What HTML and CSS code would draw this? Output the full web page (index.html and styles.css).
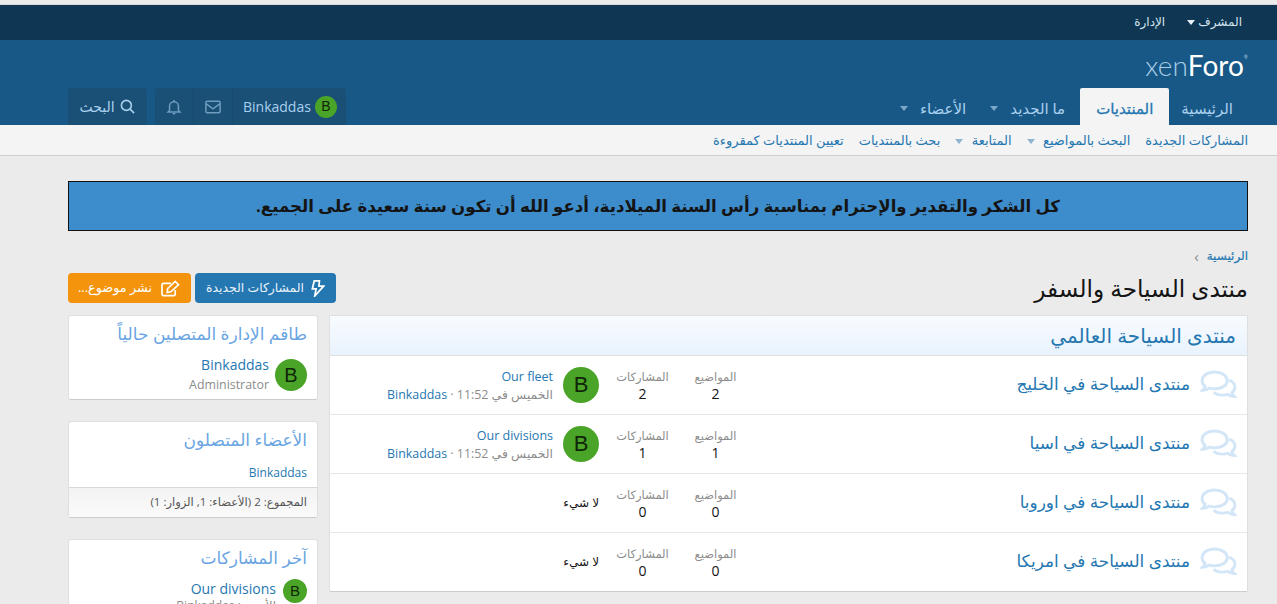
FILE: index.html
```html
<!DOCTYPE html>
<html lang="ar" dir="rtl">
<head>
<meta charset="utf-8">
<title>منتدى السياحة والسفر</title>
<link rel="stylesheet" href="styles.css">
</head>
<body>
<div class="page">
  <div class="staffbar">
    <a class="staff-link">المشرف <span class="caret caret-white"></span></a>
    <a class="staff-link">الإدارة</a>
  </div>
  <header class="header">
    <div class="logo-row"><span class="logo" dir="ltr"><span class="logo-xen">xen</span>Foro<sup class="logo-r">®</sup></span></div>
    <div class="nav-row">
      <nav class="tabs">
        <a class="tab tab-home">الرئيسية</a>
        <a class="tab tab-active">المنتديات</a>
        <a class="tab tab-menu">ما الجديد <span class="caret caret-nav"></span></a>
        <a class="tab tab-menu">الأعضاء <span class="caret caret-nav"></span></a>
      </nav>
      <div class="tools">
        <div class="toolgroup">
          <a class="tool tool-user"><span class="avatar avatar-xs">B</span><span dir="ltr">Binkaddas</span></a>
          <a class="tool tool-icon">
            <svg class="ico-m" viewBox="0 0 18 16"><rect x="1" y="1.500" width="16" height="13" rx="1.600"/><path d="M1.500 4.500 9 10l7.500-5.500"/></svg>
          </a>
          <a class="tool tool-icon">
            <svg class="ico-m" viewBox="0 0 16 18"><path d="M8 1v1.500M3 13V8a5 5 0 0 1 10 0v5l1.500 1.500h-13z"/><path d="M6.500 16.500h3"/></svg>
          </a>
        </div>
        <a class="tool toolgroup tool-search">
          <svg class="ico-s" viewBox="0 0 16 16"><circle cx="6.800" cy="6.800" r="5.300"/><path d="m10.800 10.800 4.200 4.200"/></svg>
          <span>البحث</span>
        </a>
      </div>
    </div>
  </header>
  <div class="subnav">
    <a>المشاركات الجديدة</a>
    <a>البحث بالمواضيع <span class="caret caret-sub"></span></a>
    <a>المتابعة <span class="caret caret-sub"></span></a>
    <a>بحث بالمنتديات</a>
    <a>تعيين المنتديات كمقروءة</a>
  </div>
  <main class="content">
    <div class="notice">كل الشكر والتقدير والإحترام بمناسبة رأس السنة الميلادية، أدعو الله أن تكون سنة سعيدة على الجميع.</div>
    <div class="crumbs"><a>الرئيسية</a><span class="crumb-sep">›</span></div>
    <div class="titlebar">
      <h1 class="title">منتدى السياحة والسفر</h1>
      <div class="actions">
        <a class="btn btn-blue">
          <svg class="btn-ico" viewBox="0 0 14 18"><path d="M8.500 1H3L1 9.500h4L3.500 17 13 6.500H8z"/></svg>
          المشاركات الجديدة</a>
        <a class="btn btn-orange">
          <svg class="btn-ico btn-ico-w" viewBox="0 0 20 18"><path d="M15 10.500V15a1.500 1.500 0 0 1-1.500 1.500h-11A1.500 1.500 0 0 1 1 15V5a1.500 1.500 0 0 1 1.500-1.500h8"/><path d="M7 9 15 1.500 18.500 5l-8 7.500-4 .8z"/></svg>
          نشر موضوع...</a>
      </div>
    </div>
    <div class="columns">
      <section class="forums">
        <h2 class="cat">منتدى السياحة العالمي</h2>
        <div class="row">
          <svg class="comments" viewBox="0 0 38 30"><path d="M15 2C7.500 2 2 6 2 11c0 2.500 1.300 4.500 3.200 6-.4 1.700-1.500 3-2.700 4 3 0 5.500-1 7-2.200 1.800.5 3.500.7 5.500.7 7.500 0 13-3.500 13-8.500S22.500 2 15 2z"/><path d="M30 10.500c3.700 1.500 6 4 6 7 0 2.500-1.300 4.500-3.200 6 .4 1.700 1.500 3 2.700 4-3 0-5.500-1-7-2.200-1.800.5-3.500.7-5.500.7-3.500 0-7-1-9-3"/></svg>
          <a class="forum-name">منتدى السياحة في الخليج</a>
          <div class="stat"><span class="stat-label">المواضيع</span><span class="stat-val">2</span></div>
          <div class="stat"><span class="stat-label">المشاركات</span><span class="stat-val">2</span></div>
          <div class="last">
            <span class="avatar avatar-m">B</span>
            <div class="last-text">
              <a class="last-title" dir="ltr">Our fleet</a>
              <div class="last-meta">الخميس في 11:52 · <a dir="ltr">Binkaddas</a></div>
            </div>
          </div>
        </div>
        <div class="row">
          <svg class="comments" viewBox="0 0 38 30"><path d="M15 2C7.500 2 2 6 2 11c0 2.500 1.300 4.500 3.200 6-.4 1.700-1.500 3-2.700 4 3 0 5.500-1 7-2.200 1.800.5 3.500.7 5.500.7 7.500 0 13-3.500 13-8.500S22.500 2 15 2z"/><path d="M30 10.500c3.700 1.500 6 4 6 7 0 2.500-1.300 4.500-3.200 6 .4 1.700 1.500 3 2.700 4-3 0-5.500-1-7-2.200-1.800.5-3.500.7-5.500.7-3.500 0-7-1-9-3"/></svg>
          <a class="forum-name">منتدى السياحة في اسيا</a>
          <div class="stat"><span class="stat-label">المواضيع</span><span class="stat-val">1</span></div>
          <div class="stat"><span class="stat-label">المشاركات</span><span class="stat-val">1</span></div>
          <div class="last">
            <span class="avatar avatar-m">B</span>
            <div class="last-text">
              <a class="last-title" dir="ltr">Our divisions</a>
              <div class="last-meta">الخميس في 11:52 · <a dir="ltr">Binkaddas</a></div>
            </div>
          </div>
        </div>
        <div class="row">
          <svg class="comments" viewBox="0 0 38 30"><path d="M15 2C7.500 2 2 6 2 11c0 2.500 1.300 4.500 3.200 6-.4 1.700-1.500 3-2.700 4 3 0 5.500-1 7-2.200 1.800.5 3.500.7 5.500.7 7.500 0 13-3.500 13-8.500S22.500 2 15 2z"/><path d="M30 10.500c3.700 1.500 6 4 6 7 0 2.500-1.300 4.500-3.200 6 .4 1.700 1.500 3 2.700 4-3 0-5.500-1-7-2.200-1.800.5-3.500.7-5.500.7-3.500 0-7-1-9-3"/></svg>
          <a class="forum-name">منتدى السياحة في اوروبا</a>
          <div class="stat"><span class="stat-label">المواضيع</span><span class="stat-val">0</span></div>
          <div class="stat"><span class="stat-label">المشاركات</span><span class="stat-val">0</span></div>
          <div class="last"><span class="none">لا شيء</span></div>
        </div>
        <div class="row">
          <svg class="comments" viewBox="0 0 38 30"><path d="M15 2C7.500 2 2 6 2 11c0 2.500 1.300 4.500 3.200 6-.4 1.700-1.500 3-2.700 4 3 0 5.500-1 7-2.200 1.800.5 3.500.7 5.500.7 7.500 0 13-3.500 13-8.500S22.500 2 15 2z"/><path d="M30 10.500c3.700 1.500 6 4 6 7 0 2.500-1.300 4.500-3.200 6 .4 1.700 1.500 3 2.700 4-3 0-5.500-1-7-2.200-1.800.5-3.500.7-5.500.7-3.500 0-7-1-9-3"/></svg>
          <a class="forum-name">منتدى السياحة في امريكا</a>
          <div class="stat"><span class="stat-label">المواضيع</span><span class="stat-val">0</span></div>
          <div class="stat"><span class="stat-label">المشاركات</span><span class="stat-val">0</span></div>
          <div class="last"><span class="none">لا شيء</span></div>
        </div>
      </section>
      <aside class="side">
        <section class="card">
          <h3 class="card-title">طاقم الإدارة المتصلين حالياً</h3>
          <div class="staff-row">
            <span class="avatar avatar-m2">B</span>
            <div class="staff-text">
              <a class="staff-name" dir="ltr">Binkaddas</a>
              <div class="staff-role" dir="ltr">Administrator</div>
            </div>
          </div>
        </section>
        <section class="card">
          <h3 class="card-title">الأعضاء المتصلون</h3>
          <div class="online"><a dir="ltr">Binkaddas</a></div>
          <div class="card-foot">المجموع: 2 (الأعضاء: 1, الزوار: 1)</div>
        </section>
        <section class="card">
          <h3 class="card-title">آخر المشاركات</h3>
          <div class="recent">
            <span class="avatar avatar-s">B</span>
            <div>
              <a class="recent-title" dir="ltr">Our divisions</a>
              <div class="recent-meta">الأحدث: Binkaddas</div>
            </div>
          </div>
        </section>
      </aside>
    </div>
  </main>
</div>
</body>
</html>
```
FILE: styles.css
```css
* { box-sizing: border-box; }
html, body { margin: 0; padding: 0; }
body {
  background: #ebebeb;
  color: #141414;
  font-family: "Open Sans", "Noto Sans", "DejaVu Sans", sans-serif;
  font-size: 13px;
  line-height: 1.4;
}
a { color: #2577b1; text-decoration: none; }
.page { height: 604px; overflow: hidden; }

.staffbar {
  margin-top: 4px;
  border-top: 1px solid #d8d8d8;
  height: 36px;
  background: #0f3652;
  display: flex;
  align-items: center;
  gap: 22px;
  padding: 0 35px 0 68px;
  font-size: 12px;
}
.staff-link { color: #d3e4f0; }

.caret {
  display: inline-block;
  width: 0;
  height: 0;
  border-style: solid;
  border-width: 5px 4.500px 0;
  border-color: transparent;
  vertical-align: middle;
}
.caret-white { border-top-color: #e8f1f7; margin-right: 0; }
.caret-nav { border-top-color: #7ba7c7; margin-right: 12px; }
.caret-sub { border-top-color: #8eb4d0; margin-right: 5px; }

.header { background: #185886; height: 85px; padding: 0 29px 0 68px; display: flex; flex-direction: column; }
.logo-row { height: 48px; display: flex; align-items: center; justify-content: flex-start; }
.logo {
  font-family: "Lato", "Open Sans", sans-serif;
  font-weight: 400;
  font-size: 28px;
  line-height: 1;
  color: #fff;
  margin-top: 1px;
}
.logo-xen { color: #a9cde6; font-weight: 300; }
.logo-r { font-size: 5px; vertical-align: top; line-height: 2.600; color: #a9cde6; }

.nav-row { flex: 1; display: flex; justify-content: space-between; align-items: flex-end; }
.tabs { display: flex; height: 37px; }
.tab {
  color: #a9d0ee;
  font-size: 15px;
  padding: 3px 15px 0 13px;
  display: flex;
  align-items: center;
  white-space: nowrap;
}
.tab-home { padding-left: 12px; }
.tab-active {
  background: #f4f4f4;
  color: #2577b1;
  -webkit-text-stroke: 0.300px #2577b1;
  padding: 3px 16px 0;
  border-radius: 2px 2px 0 0;
}
.tab-menu { padding: 3px 15px 0 9px; }

.tools { display: flex; gap: 8px; height: 37px; }
.toolgroup { display: flex; background: #1a4f76; border-radius: 4px 4px 0 0; }
.tool { color: #a9d0ee; display: flex; align-items: center; font-size: 14px; }
.tool-user { padding: 0 9px 0 10px; gap: 4px; height: 37px; }
.tool-icon { width: 39px; height: 37px; justify-content: center; border-right: 1px solid #184a6f; }
.tool-search { padding: 0 9px 0 8px; gap: 5px; width: 79px; justify-content: center; }
.ico-m { width: 16px; height: 16px; fill: none; stroke: #6e9cbe; stroke-width: 1.700; }
.ico-s { width: 15px; height: 15px; fill: none; stroke: #a9d0ee; stroke-width: 1.700; }

.avatar {
  display: inline-flex;
  align-items: center;
  justify-content: center;
  border-radius: 50%;
  background: #49a427;
  color: #10250a;
  font-family: "Liberation Sans", sans-serif;
  flex: none;
}
.avatar-xs { width: 22px; height: 22px; font-size: 14px; }
.avatar-s { width: 24px; height: 24px; font-size: 15px; }
.avatar-m { width: 36px; height: 36px; font-size: 22px; }
.avatar-m2 { width: 32px; height: 32px; font-size: 20px; }

.subnav {
  height: 31px;
  background: #f4f4f4;
  border-bottom: 1px solid #cfcfcf;
  padding: 0 29px 0 68px;
  display: flex;
  align-items: center;
  gap: 15px;
  font-size: 13px;
}

.content { padding: 25px 29px 0 68px; }
.notice {
  height: 50px;
  background: #3d8ccb;
  border: 1px solid #111;
  color: #141414;
  font-size: 16.600px;
  font-weight: 700;
  display: flex;
  align-items: center;
  justify-content: center;
}
.crumbs { margin-top: 16px; height: 18px; display: flex; align-items: center; gap: 8px; font-size: 12px; -webkit-text-stroke: 0.200px #2577b1; }
.crumb-sep { color: #8c8c8c; font-size: 15px; -webkit-text-stroke: 0; }
.titlebar { display: flex; justify-content: space-between; align-items: flex-start; height: 42px; margin-top: 8px; }
.title { margin: -1px 0 0; font-size: 23.200px; font-weight: 400; line-height: 32px; color: #141414; }
.actions { display: flex; gap: 4px; }
.btn {
  height: 30px;
  border-radius: 4px;
  color: #eaf3fa;
  font-size: 12.400px;
  display: flex;
  align-items: center;
  gap: 6px;
  padding: 0 11px;
  white-space: nowrap;
}
.btn-blue { background: #2577b1; width: 141px; gap: 7px; }
.btn-orange { background: #f4940c; width: 123px; color: #fff; font-size: 12.800px; gap: 9px; }
.btn-ico { width: 14px; height: 17px; fill: none; stroke: #fff; stroke-width: 1.800; flex: none; }
.btn-ico-w { width: 19px; }

.columns { display: flex; justify-content: space-between; align-items: flex-start; }
.forums {
  width: 919px;
  background: #fff;
  border: 1px solid #dfdfdf;
  border-bottom-color: #cbcbcb;
  border-radius: 2px;
}
.cat {
  margin: 0;
  height: 40px;
  background: linear-gradient(#f8fbfe, #e9f3fd);
  border-bottom: 1px solid #dfdfdf;
  color: #2577b1;
  font-size: 20px;
  font-weight: 400;
  padding: 0 11px;
  display: flex;
  align-items: center;
}
.row {
  height: 59px;
  display: flex;
  align-items: center;
  border-bottom: 1px solid #e7e7e7;
  padding-right: 10px;
}
.row:last-child { height: 58px; border-bottom: 0; }
.comments { width: 37px; height: 29px; fill: none; stroke: #d2e6f7; stroke-width: 3; flex: none; margin: -2px 0 0 10px; }
.forum-name { flex: 1; font-size: 16.900px; margin-bottom: 3px; }
.stat { width: 73px; display: flex; flex-direction: column; align-items: center; flex: none; line-height: 17px; }
.stat-label { color: #8c8c8c; font-size: 11.500px; }
.stat-val { font-size: 14px; line-height: 17px; }
.last { width: 276px; flex: none; display: flex; align-items: center; gap: 10px; padding-right: 7px; }
.last-title { display: block; font-size: 12.500px; text-align: right; line-height: 18px; }
.last-meta { color: #8c8c8c; font-size: 12.400px; line-height: 17px; }
.none { font-size: 12px; }

.side { width: 250px; display: flex; flex-direction: column; gap: 21px; }
.card {
  background: #fff;
  border: 1px solid #dfdfdf;
  border-bottom-color: #cbcbcb;
  border-radius: 3px;
}
.card-title { margin: 0; color: #6aa5e3; font-size: 17px; font-weight: 400; line-height: 24px; padding: 6px 10px 0; }
.staff-row { display: flex; align-items: center; gap: 6px; padding: 9px 10px 4px; }
.staff-text { text-align: right; line-height: 20px; font-size: 14px; }
.staff-name { display: block; font-size: 14px; }
.staff-role { color: #8c8c8c; font-size: 12.400px; }
.online { padding: 13px 10px 5px; font-size: 12px; text-align: right; }
.card-foot {
  background: linear-gradient(#f3f3f3, #fafafa);
  border-top: 1px solid #d8d8d8;
  padding: 0 10px;
  height: 30px;
  display: flex;
  align-items: center;
  font-size: 11.500px;
  color: #555;
}
.recent { display: flex; gap: 7px; padding: 9px 10px 12px; }
.recent-title { display: block; font-size: 14px; text-align: right; }
.recent-meta { color: #8c8c8c; font-size: 12px; }
```
